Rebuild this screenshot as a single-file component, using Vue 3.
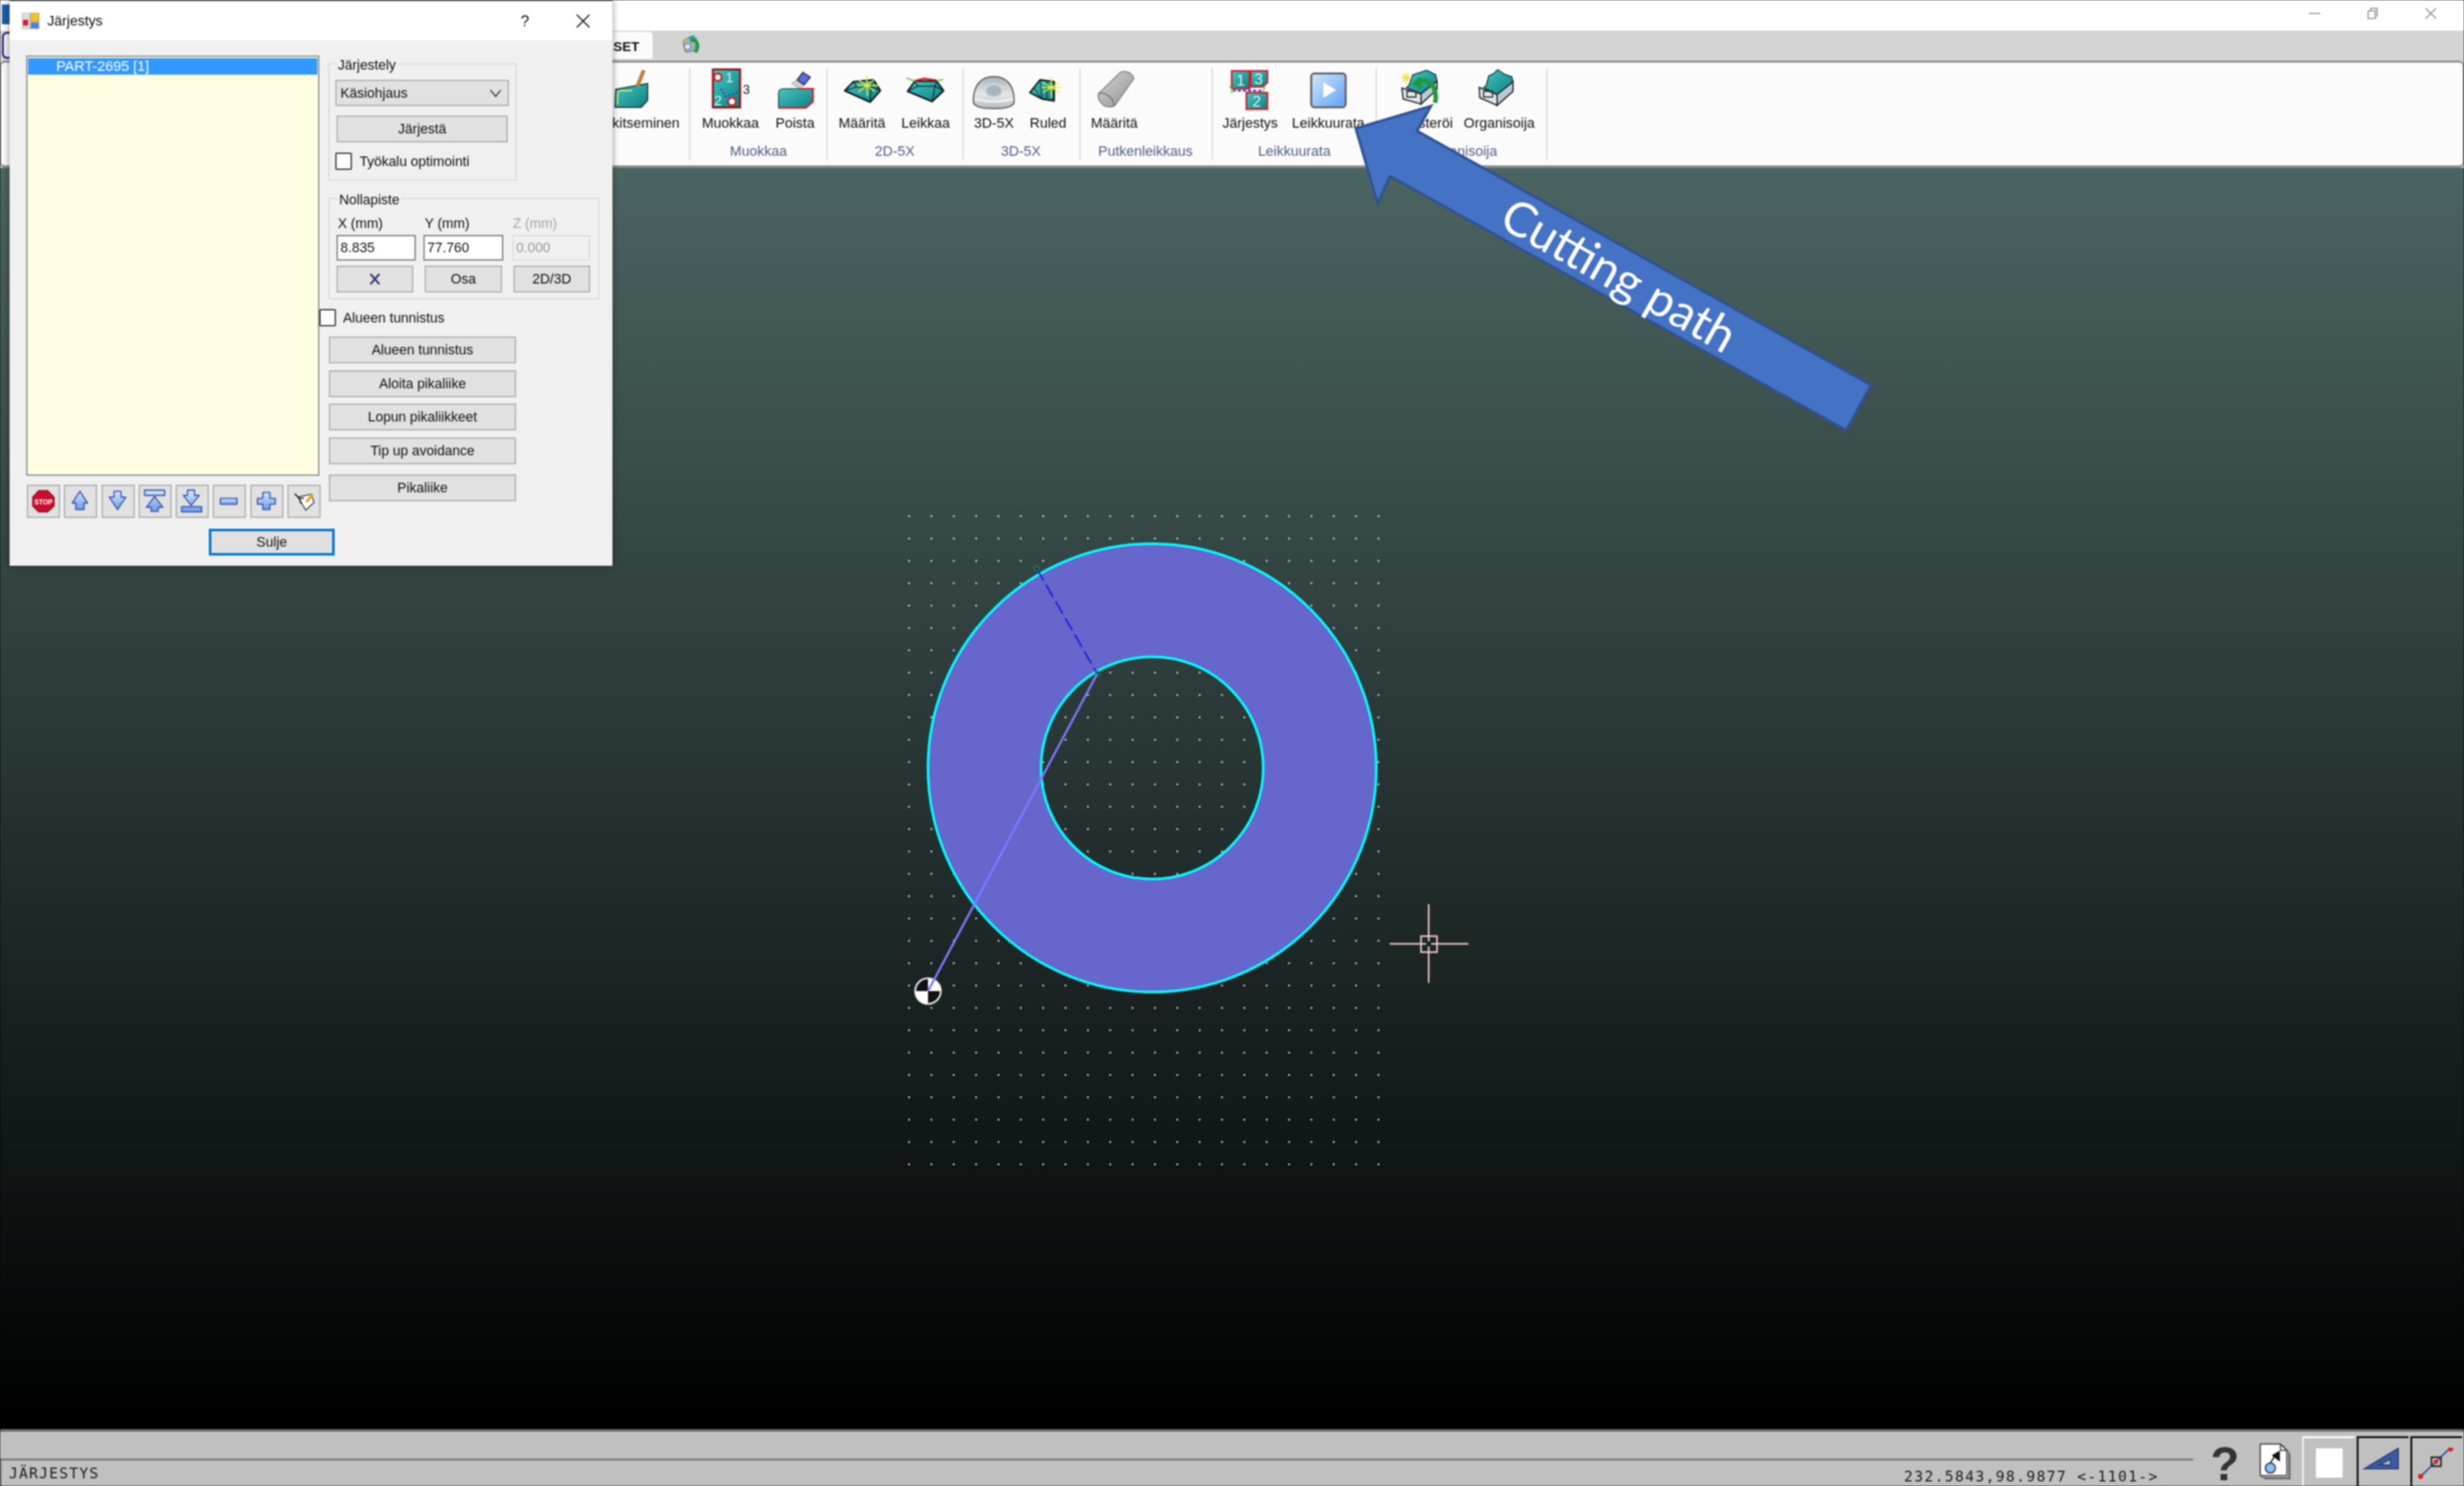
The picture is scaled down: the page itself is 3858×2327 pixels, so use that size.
<script setup>
const sideButtons = [
  { label: 'Alueen tunnistus', cls: '' },
  { label: 'Aloita pikaliike', cls: '' },
  { label: 'Lopun pikaliikkeet', cls: '' },
  { label: 'Tip up avoidance', cls: '' },
  { label: 'Pikaliike', cls: 'last' }
]
const upArrow = 'M25,9 L38,29 L32,29 L32,40 L18,40 L18,29 L12,29 Z'
const downArrow = 'M19,9 L31,9 L31,19 L39,19 L25,40 L11,19 L19,19 Z'
const toTop = 'M25,18 L39,36 L31,36 L31,43 L19,43 L19,36 L11,36 Z M8,7 H42 V16 H8 Z'
const toBottom = 'M18,7 H30 V16 H38 L24,33 L11,16 H18 Z M8,35 H42 V44 H8 Z'
const minus = 'M11,21 H39 V31 H11 Z'
const plus = 'M19,11 H31 V21 H40 V31 H31 V40 H19 V31 H10 V21 H19 Z'
const arrowIcons = [upArrow, downArrow, toTop, toBottom, minus, plus]
</script>

<template>
  <div class="app">
    <header class="titlebar">
      <div class="app-icon"></div>
      <div class="win-controls">
        <svg class="win-ico" viewBox="0 0 20 20"><path d="M1,10 H19" /></svg>
        <svg class="win-ico" viewBox="0 0 20 20"><path d="M3,6 H14 V18 H3 Z M7,6 V2 H17 V14 H14" /></svg>
        <svg class="win-ico" viewBox="0 0 20 20"><path d="M2,2 L18,18 M18,2 L2,18" /></svg>
      </div>
    </header>

    <div class="tabs">
      <div class="tab-home"></div>
      <div class="tab-active">ASETUKSET</div>
      <svg class="tab-icon" viewBox="0 0 32 30">
        <path d="M4,10 L14,4 L26,6 L22,26 L8,28 Z" fill="#9fb3bd" stroke="#56666e" />
        <path d="M14,3 L22,1 L24,8 L15,10 Z" fill="#2aa3a0" />
        <path d="M8,8 L4,6 M5,11 L1,12" stroke="#dede40" stroke-width="2" />
        <path d="M16,10 C26,6 31,16 24,28" fill="none" stroke="#1d9a3a" stroke-width="5" />
        <rect x="7" y="15" width="9" height="8" fill="#dfe8ec" stroke="#56666e" />
      </svg>
    </div>

    <nav class="ribbon">
      <section class="group g0">
        <div class="items end">
          <div class="item">
            <svg class="ico" viewBox="0 0 64 64">
              <defs>
                <linearGradient id="teal" x1="0" y1="0" x2="1" y2="1">
                  <stop offset="0" stop-color="#48c6c2" />
                  <stop offset="1" stop-color="#0a8080" />
                </linearGradient>
                <linearGradient id="blueArrow" x1="0" y1="0" x2="0" y2="1">
                  <stop offset="0" stop-color="#d6e4fb" />
                  <stop offset="1" stop-color="#6c9ce8" />
                </linearGradient>
                <linearGradient id="play" x1="0" y1="0" x2="1" y2="1">
                  <stop offset="0" stop-color="#d4e6fb" />
                  <stop offset="1" stop-color="#5ea2f4" />
                </linearGradient>
                <linearGradient id="dome" x1="0" y1="0" x2="0" y2="1">
                  <stop offset="0" stop-color="#aab2b8" />
                  <stop offset=".55" stop-color="#e4e8ea" />
                  <stop offset="1" stop-color="#b8bcbe" />
                </linearGradient>
                <linearGradient id="tube" x1="0" y1="0" x2="1" y2="1">
                  <stop offset="0" stop-color="#d8d8d8" />
                  <stop offset="1" stop-color="#8e8e8e" />
                </linearGradient>
              </defs>
              <path d="M4,33 L54,24 V50 L44,61 H3 Z" fill="url(#teal)" stroke="#1c3a3a" stroke-width="2" />
              <path d="M7,57 V40 Q8,35 14,35 H30" fill="none" stroke="#e2e868" stroke-width="2" />
              <path d="M48,3 L38,28" stroke="#bd8236" stroke-width="6" />
            </svg>
            <span>Merkitseminen</span>
          </div>
        </div>
      </section>

      <section class="group g1">
        <div class="items">
          <div class="item">
            <svg class="ico" viewBox="0 0 64 64">
              <rect x="4.5" y="2" width="42" height="59" fill="url(#teal)" stroke="#111" stroke-width="2" />
              <rect x="3.5" y="1" width="44" height="61" fill="none" stroke="#e0101c" stroke-width="2" />
              <circle cx="12" cy="14" r="6" fill="#d8efee" stroke="#d0202a" stroke-width="3" />
              <circle cx="34" cy="52" r="6" fill="#fff" stroke="#d0202a" stroke-width="3" />
              <text x="24" y="22" class="tile-num">1</text>
              <text x="6" y="58" class="tile-num">2</text>
              <path d="M17,32 L24,44 L44,38" fill="none" stroke="#1030e0" stroke-width="2" stroke-dasharray="3 3" />
              <text x="51" y="40" class="three">3</text>
            </svg>
            <span>Muokkaa</span>
          </div>
          <div class="item">
            <svg class="ico" viewBox="0 0 64 64">
              <path d="M6,38 Q7,32 14,32 H60 V52 L49,62 H6 Z" fill="url(#teal)" stroke="#20403f" stroke-width="1.5" />
              <path d="M38,32 H60 V52 L49,62 H6" fill="none" stroke="#e0101c" stroke-width="2.5" />
              <path d="M35,18 L46,26 L38,31 L26,24 Z" fill="#cfcfcf" stroke="#999" />
              <path d="M44,6 L56,14 L46,26 L35,18 Z" fill="#5a68d8" stroke="#222" stroke-width="1.5" />
            </svg>
            <span>Poista</span>
          </div>
        </div>
        <div class="group-label">Muokkaa</div>
      </section>

      <section class="group g2">
        <div class="items">
          <div class="item">
            <svg class="ico" viewBox="0 0 64 64">
              <path d="M4.5,35 L18,21 L50,18 L60.5,35 L44.5,53 Z" fill="url(#teal)" stroke="#111" stroke-width="2.5" stroke-linejoin="round" />
              <path d="M24,29 H46 L44.5,53 M24,29 L4.5,35 M46,28 L60.5,35 M18,21 L24,29 M50,18 L46,28" fill="none" stroke="#123" stroke-width="1.5" />
              <path d="M39,10 L40,44 M26,18 L52,36 M52,17 L26,37 M24,27 H58" stroke="#e8ee44" stroke-width="2" />
            </svg>
            <span>Määritä</span>
          </div>
          <div class="item">
            <svg class="ico" viewBox="0 0 64 64">
              <path d="M4,36 L15.5,20 L49.5,20 L60.5,35 L42.5,52 Z" fill="url(#teal)" stroke="#111" stroke-width="2.5" stroke-linejoin="round" />
              <path d="M20,28 H47 L42.5,52 M20,28 L4,36 M47,28 L60.5,35 M15.5,20 L20,28 M49.5,20 L47,28" fill="none" stroke="#123" stroke-width="1.5" />
              <path d="M15,20 L30,16 L50,19" fill="none" stroke="#e0101c" stroke-width="3" />
              <path d="M2,15 L15,20 M60,17 L50,20" stroke="#52d050" stroke-width="2" />
            </svg>
            <span>Leikkaa</span>
          </div>
        </div>
        <div class="group-label">2D-5X</div>
      </section>

      <section class="group g3">
        <div class="items">
          <div class="item">
            <svg class="ico" viewBox="0 0 64 64">
              <path d="M0,52 C0,24 14,13 32,13 C50,13 64,24 64,52 C64,60 50,63 32,63 C14,63 0,60 0,52 Z" fill="url(#dome)" stroke="#5a5a5a" stroke-width="2" />
              <ellipse cx="32" cy="35" rx="13" ry="10" fill="#a9b5bc" stroke="#d6dcdf" stroke-width="2" />
              <path d="M2,48 Q32,56 62,48" fill="none" stroke="#f6f6f6" stroke-width="3" />
            </svg>
            <span>3D-5X</span>
          </div>
          <div class="item">
            <svg class="ico" viewBox="0 0 64 64">
              <path d="M3.5,38 L19.5,18 L41.5,21 V51 L22.5,48 Z" fill="url(#teal)" stroke="#111" stroke-width="2.5" stroke-linejoin="round" />
              <path d="M19.5,18 L22.5,48 M10,30 L22,48 M30,20 L30,50" stroke="#123" stroke-width="1.2" />
              <path d="M37,14 L37,46 M24,22 L50,38 M50,22 L24,38 M22,30 H52" stroke="#e8ee44" stroke-width="2" />
            </svg>
            <span>Ruled</span>
          </div>
        </div>
        <div class="group-label">3D-5X</div>
      </section>

      <section class="group g4">
        <div class="items">
          <div class="item">
            <svg class="ico" viewBox="0 0 64 64">
              <path d="M6.5,40 L41.5,6 Q57,2 62.5,16 L33,58 Q24,63 15,58 Q5,50 6.5,40 Z" fill="url(#tube)" stroke="#777" stroke-width="1.5" />
              <path d="M6.5,40 Q14,36 24,44 Q33,52 30,60" fill="none" stroke="#666" stroke-width="1.5" />
            </svg>
            <span>Määritä</span>
          </div>
        </div>
        <div class="group-label">Putkenleikkaus</div>
      </section>

      <section class="group g5">
        <div class="items">
          <div class="item">
            <svg class="ico" viewBox="0 0 64 64">
              <g stroke="#e0101c" stroke-width="2.5">
                <rect x="3.5" y="4" width="28" height="28" fill="url(#teal)" />
                <path d="M33.5,4 H59.5 V22 L52,29 H33.5 Z" fill="url(#teal)" />
                <rect x="26.5" y="38" width="33" height="26" fill="url(#teal)" />
              </g>
              <text x="11" y="27" class="tile-num small">1</text>
              <text x="39" y="25" class="tile-num small">3</text>
              <text x="36" y="60" class="tile-num small">2</text>
              <path d="M5,35 H52" stroke="#1030e0" stroke-width="2.5" stroke-dasharray="5 3" />
              <path d="M0,28 L6,36 L2,38 M56,28 L52,36" fill="none" stroke="#52d050" stroke-width="2" />
            </svg>
            <span>Järjestys</span>
          </div>
          <div class="item">
            <svg class="ico" viewBox="0 0 64 64">
              <rect x="5" y="8" width="54" height="53" rx="5" fill="url(#play)" stroke="#5c5c5c" stroke-width="3" />
              <path d="M24,22 L44,34 L24,46 Z" fill="#fff" />
            </svg>
            <span>Leikkuurata</span>
          </div>
        </div>
        <div class="group-label">Leikkuurata</div>
      </section>

      <section class="group g6">
        <div class="items">
          <div class="item">
            <svg class="ico" viewBox="0 0 64 64">
              <path d="M12,27 L18,10 L28,7 L40,3 L54,10 L56,20 L31,40 L8,30 Z" fill="url(#teal)" stroke="#123" stroke-width="1.5" />
              <path d="M1,31 L31,40 V56 L3,48 Z" fill="#dfe8ec" stroke="#222" stroke-width="2" />
              <path d="M31,40 L56,20 V33 L31,56 Z" fill="#b6cbd4" stroke="#222" stroke-width="2" />
              <rect x="9" y="36" width="14" height="9" fill="none" stroke="#333" stroke-width="2" />
              <path d="M8,6 V24 M0,15 H16 M2,9 L14,21 M14,9 L2,21" stroke="#f0e048" stroke-width="2" />
              <path d="M53,54 C58,32 44,12 26,22" fill="none" stroke="#1d9a3a" stroke-width="7" />
              <path d="M30,12 L16,25 L32,32 Z" fill="#1d9a3a" />
            </svg>
            <span>Rekisteröi</span>
          </div>
          <div class="item">
            <svg class="ico" viewBox="0 0 64 64">
              <path d="M12,27 L16,12 L24,8 L30,2 L40,9 L52,13 L54,21 L29,41 L8,30 Z" fill="url(#teal)" stroke="#123" stroke-width="1.5" />
              <path d="M1,30 L29,41 V58 L2,46 Z" fill="#dfe8ec" stroke="#222" stroke-width="2" />
              <path d="M29,41 L54,21 V36 L29,58 Z" fill="#b6cbd4" stroke="#222" stroke-width="2" />
              <rect x="8" y="36" width="14" height="9" fill="none" stroke="#333" stroke-width="2" />
            </svg>
            <span>Organisoija</span>
          </div>
        </div>
        <div class="group-label">Organisoija</div>
      </section>
    </nav>

    <main class="canvas">
      <svg class="scene" viewBox="0 263 3858 1975">
        <defs>
          <pattern id="dots" x="1422" y="807" width="35" height="35" patternUnits="userSpaceOnUse">
            <rect width="2.6" height="2.6" fill="#dedede" />
          </pattern>
        </defs>
        <rect x="1420" y="805" width="742" height="1025" fill="url(#dots)" />
        <path
          d="M1453,1202.5 a351,351 0 1,0 702,0 a351,351 0 1,0 -702,0 Z M1630,1202.5 a174,174 0 1,0 348,0 a174,174 0 1,0 -348,0 Z"
          fill="#6666cc" fill-rule="evenodd" stroke="#00ffff" stroke-width="4"
        />
        <path d="M1623,890 L1718,1055" stroke="#1a1ae0" stroke-width="2.5" stroke-dasharray="22 8" />
        <circle cx="1623" cy="890" r="4" fill="none" stroke="#1a8a3a" stroke-width="1.5" />
        <circle cx="1719" cy="1055" r="4" fill="none" stroke="#1a8a3a" stroke-width="1.5" />
        <circle cx="1453" cy="1552" r="20" fill="#111" stroke="#dcdcdc" stroke-width="3" />
        <path d="M1453,1552 V1532 A20,20 0 0 1 1473,1552 Z M1453,1552 V1572 A20,20 0 0 1 1433,1552 Z" fill="#fff" />
        <path d="M1453,1552 L1718,1055" stroke="#7a7aff" stroke-width="3.5" />
        <g fill="none" stroke="#f2cccc" stroke-width="2.5">
          <path d="M2176,1478 H2233 M2241,1478 H2299 M2237,1416 V1474 M2237,1482 V1539" />
          <rect x="2225" y="1466" width="25" height="25" />
        </g>
      </svg>
    </main>

    <footer class="status">
      <div class="status-main">
        <div class="status-top"></div>
        <div class="status-cmd">
          <span class="cmd-text">JÄRJESTYS</span>
          <span class="coords">232.5843,98.9877 &lt;-1101-&gt;</span>
        </div>
      </div>
      <div class="status-tools">
        <span class="help-mark">?</span>
        <svg class="doc-ico" viewBox="0 0 52 60">
          <path d="M8,8 H40 L50,18 V58 H8 Z" fill="#777" />
          <path d="M5,5 H38 L47,15 V55 H5 Z" fill="#eee" stroke="#555" stroke-width="1.5" />
          <path d="M2,2 H34 L44,12 V52 H2 Z" fill="#fff" stroke="#444" stroke-width="2" />
          <path d="M34,2 V12 H44" fill="none" stroke="#444" stroke-width="2" />
          <circle cx="18" cy="40" r="8" fill="#8cc0f0" stroke="#235" stroke-width="2" />
          <path d="M18,32 L28,16 M22,20 L32,14 V28 Z" fill="#111" stroke="#111" stroke-width="2" />
        </svg>
        <div class="tool raised"><div class="white-box"></div></div>
        <div class="tool sunk">
          <svg class="tool-ico" viewBox="0 0 78 60">
            <path fill-rule="evenodd" d="M62,1 V33 H9 Z M50,18 L32,27 H50 Z" fill="#3c5a9e" stroke="#2a3f75" stroke-width="2" />
          </svg>
        </div>
        <div class="tool sunk">
          <svg class="tool-ico" viewBox="0 0 78 60">
            <path d="M13,45 L60,0" stroke="#3456a8" stroke-width="2.5" />
            <rect x="30" y="15" width="15" height="14" fill="none" stroke="#222" stroke-width="2.5" />
            <circle cx="13" cy="45" r="4" fill="#e02020" />
            <circle cx="37" cy="22" r="3.5" fill="#e02020" />
            <circle cx="60" cy="2" r="4" fill="#e02020" />
          </svg>
        </div>
      </div>
    </footer>

    <svg class="arrow" viewBox="2100 150 850 540">
      <path
        d="M2240.6,166 L2218.8,205 L2929.5,603 L2891,674 L2176.5,276 L2157,319 L2122.8,201 Z"
        fill="#4472c4" stroke="#2f528f" stroke-width="4"
      />
      <text class="arrow-text" x="2534" y="433" transform="rotate(29.5 2534 433)" dy="24">Cutting path</text>
    </svg>

    <aside class="dialog">
      <div class="dlg-title">
        <svg class="dlg-ico" viewBox="0 0 28 26">
          <rect x="0" y="0" width="13" height="25" fill="#dcdcdc" stroke="#aaa" />
          <rect x="14" y="0" width="13" height="14" fill="#f6c21c" stroke="#a88" />
          <rect x="2" y="11" width="8" height="9" fill="#d42020" />
          <rect x="14" y="15" width="13" height="10" fill="#4a82d8" stroke="#aaa" />
        </svg>
        <span class="dlg-name">Järjestys</span>
        <span class="dlg-help">?</span>
        <svg class="dlg-close" viewBox="0 0 24 24"><path d="M2,2 L22,22 M22,2 L2,22" /></svg>
      </div>

      <div class="dlg-body">
        <div class="dlg-left">
          <div class="list">
            <div class="list-row">PART-2695 [1]</div>
          </div>
          <div class="icon-row">
            <button class="icon-btn">
              <svg viewBox="0 0 52 52">
                <path d="M18,8 H33 L44,19 V34 L33,44 H18 L8,34 V19 Z" fill="#c8102e" stroke="#8f0a1e" stroke-width="2" />
                <text x="26" y="31" class="stop">STOP</text>
              </svg>
            </button>
            <button v-for="d in arrowIcons" :key="d" class="icon-btn">
              <svg viewBox="0 0 52 52">
                <path :d="d" fill="url(#blueArrow)" stroke="#3050a8" stroke-width="2" stroke-linejoin="round" />
              </svg>
            </button>
            <button class="icon-btn">
              <svg viewBox="0 0 52 52">
                <path d="M16,19 L38,14 L43,28 L29,41 Z" fill="#fff" stroke="#222" stroke-width="1.5" />
                <path d="M10,13 L18,21 M18,21 H26 M18,21 L21,30" fill="none" stroke="#111" stroke-width="2" />
                <path d="M41,14 L30,27" stroke="#dca83c" stroke-width="5" />
              </svg>
            </button>
          </div>
        </div>

        <div class="dlg-right">
          <div class="box box-order">
            <div class="legend">Järjestely</div>
            <div class="combo">
              <span>Käsiohjaus</span>
              <svg class="chev" viewBox="0 0 18 12"><path d="M1,1 L9,11 L17,1" /></svg>
            </div>
            <div class="btn btn-sort">Järjestä</div>
            <div class="check-row">
              <div class="check"></div>
              <span>Työkalu optimointi</span>
            </div>
          </div>

          <div class="box box-zero">
            <div class="legend">Nollapiste</div>
            <div class="axis-labels">
              <span>X (mm)</span>
              <span>Y (mm)</span>
              <span class="muted">Z (mm)</span>
            </div>
            <div class="axis-inputs">
              <div class="input">8.835</div>
              <div class="input">77.760</div>
              <div class="input off">0.000</div>
            </div>
            <div class="axis-btns">
              <div class="btn">
                <svg class="x-ico" viewBox="0 0 20 20"><path d="M3,2 L17,18 M17,2 L3,18" /></svg>
              </div>
              <div class="btn">Osa</div>
              <div class="btn">2D/3D</div>
            </div>
          </div>

          <div class="check-row area-row">
            <div class="check"></div>
            <span>Alueen tunnistus</span>
          </div>

          <div class="side-btns">
            <div v-for="b in sideButtons" :key="b.label" class="btn" :class="b.cls">{{ b.label }}</div>
          </div>
        </div>
      </div>

      <div class="btn btn-close">Sulje</div>
    </aside>
  </div>
</template>

<style>
html, body { margin: 0; padding: 0; background: #000; }
</style>

<style scoped>
* { box-sizing: border-box; }

.app {
  position: relative;
  width: 3858px;
  height: 2327px;
  display: flex;
  flex-direction: column;
  overflow: hidden;
  font-family: "Liberation Sans", Arial, sans-serif;
  font-size: 22px;
  line-height: 26px;
  color: #111;
  background: #fff;
  filter: blur(0.8px);
}

.titlebar { height: 48px; flex: none; background: #fff; display: flex; justify-content: space-between; }
.app-icon { width: 12px; height: 31px; margin: 7px 0 0 3px; background: #1a5fa8; }
.win-controls { display: flex; gap: 71px; padding: 11px 42px 0 0; }
.win-ico { width: 20px; height: 20px; fill: none; stroke: #9a9a9a; stroke-width: 2; }

.tabs { height: 47px; flex: none; background: #d4d4d4; display: flex; align-items: flex-start; padding: 2px 0 0 3px; }
.tab-home { width: 100px; height: 42px; border: 3px solid #2a2a80; border-radius: 8px; background: #f4f4f4; }
.tab-active {
  width: 152px; height: 45px; margin-left: 767px; padding-right: 21px;
  background: #fbfbfb; border-radius: 6px 6px 0 0;
  font-weight: 700; font-size: 21px; line-height: 46px; text-align: right; white-space: nowrap;
}
.tab-icon { width: 32px; height: 30px; margin: 4px 0 0 43px; }

.ribbon {
  height: 168px; flex: none; display: flex; padding: 9px 0 0 2px;
  background: #fbfbfb;
  border: solid #8a8a8a; border-width: 3px 2px 4px 2px; border-radius: 8px;
  box-shadow: 0 0 0 3px #d4d4d4;
}
.group {
  height: 144px; flex: none; display: flex; flex-direction: column;
  border-right: 2px solid #d9d9d9;
}
.g0 { width: 1077px; }
.g1 { width: 215px; padding-left: 18px; }
.g2 { width: 213px; padding-left: 17px; }
.g3 { width: 183px; padding-left: 16px; }
.g4 { width: 207px; padding-left: 16px; }
.g5 { width: 257px; padding-left: 15px; }
.g6 { width: 267px; padding-left: 21px; }
.g1 .group-label, .g2 .group-label, .g3 .group-label, .g4 .group-label { margin-left: -18px; }
.g5 .group-label { margin-left: -15px; }
.g6 .group-label { margin-left: -21px; }
.items { display: flex; gap: 25px; }
.items.end { justify-content: flex-end; padding-right: 15px; }
.g1 .items { gap: 26px; }
.g5 .items { gap: 22px; }
.g6 .items { gap: 17px; }
.item { display: flex; flex-direction: column; align-items: center; white-space: nowrap; }
.item span { margin-top: 9px; }
.ico { width: 64px; height: 64px; margin: 0 -16px; overflow: visible; flex: none; }
.group-label { margin-top: auto; text-align: center; color: #515f82; padding-bottom: 1px; }
.tile-num { font-family: "Liberation Sans", sans-serif; font-size: 22px; fill: #d8f4f2; }
.tile-num.small { font-size: 24px; }
.three { font-family: "Liberation Sans", sans-serif; font-size: 20px; fill: #222; }

.canvas { flex: 1; min-height: 0; background: linear-gradient(#4b6562, #000); }
.scene { display: block; width: 100%; height: 100%; }

.status { height: 89px; flex: none; display: flex; background: #c0c0c0; border-top: 4px solid #6e6e6e; }
.status-main { flex: 1; display: flex; flex-direction: column; min-width: 0; }
.status-top { height: 45px; flex: none; border-bottom: 3px solid #7a7a7a; }
.status-cmd {
  flex: 1; display: flex; justify-content: space-between; align-items: center;
  border-left: 3px solid #8a8a8a; padding: 0 54px 0 11px;
  font-family: "DejaVu Sans Mono", "Liberation Mono", monospace; color: #1c1c28;
  font-size: 23px; white-space: pre;
}
.cmd-text { letter-spacing: 1.9px; }
.coords { letter-spacing: 2.1px; padding-top: 10px; }
.status-tools { width: 424px; flex: none; display: flex; align-items: flex-end; padding-left: 27px; }
.help-mark { width: 41px; height: 68px; margin-right: 35px; font: 700 74px/68px "Liberation Sans", sans-serif; color: #333; text-align: center; }
.doc-ico { width: 52px; height: 60px; margin: 0 17px 8px 0; }
.tool { width: 82px; height: 78px; margin-right: 3px; display: flex; align-items: flex-start; justify-content: center; }
.raised { border-top: 3px solid #fff; border-left: 2px solid #fff; padding-top: 16px; }
.sunk { border-top: 3px solid #111; border-left: 3px solid #111; padding-top: 15px; }
.white-box { width: 42px; height: 46px; background: #fff; }
.tool-ico { width: 78px; height: 60px; }

.arrow { position: absolute; left: 2100px; top: 150px; width: 850px; height: 540px; }
.arrow-text { font-family: Lato, "Open Sans", sans-serif; font-size: 75px; fill: #fff; text-anchor: middle; }

.dialog {
  position: absolute; left: 15px; top: 0; width: 944px; height: 886px;
  display: flex; flex-direction: column;
  background: #f0f0f0; border-top: 2px solid #777;
  box-shadow: 0 0 10px rgba(0, 0, 0, .45);
  font-size: 21.5px;
}
.dlg-title { height: 61px; flex: none; display: flex; align-items: center; background: #fff; padding: 0 34px 0 19px; font-size: 22px; }
.dlg-ico { width: 28px; height: 26px; flex: none; }
.dlg-name { margin-left: 12px; flex: 1; }
.dlg-help { width: 22px; text-align: center; font-size: 24px; }
.dlg-close { width: 24px; height: 24px; margin-left: 68px; fill: none; stroke: #222; stroke-width: 2; }

.dlg-body { height: 748px; flex: none; display: flex; padding-left: 26px; }
.dlg-left { width: 459px; flex: none; padding-top: 24px; }
.list { height: 658px; background: #fffee2; border: 2px solid #8a8a8a; padding: 2px 1px; }
.list-row { height: 26px; background: #3399ff; color: #fff; padding-left: 44px; font-size: 22.5px; }
.icon-row { display: flex; gap: 6.3px; margin: 14px 0 0 1px; width: 461px; }
.icon-btn { width: 52px; height: 52px; flex: none; padding: 0; background: #e1e1e1; border: 2px solid #adadad; }
.icon-btn svg { display: block; width: 48px; height: 48px; }
.stop { font: 700 11.5px "Liberation Sans", sans-serif; fill: #fff; text-anchor: middle; }

.dlg-right { flex: 1; padding-top: 36px; }
.box { border: 2px solid #dcdcdc; margin-left: 14px; }
.legend { width: fit-content; margin: -12px 0 0 1px; padding: 0 3px; background: #f0f0f0; white-space: nowrap; }
.box-order { width: 295px; height: 184px; padding-left: 9px; }
.box-zero { width: 425px; height: 159px; margin-top: 27px; padding-left: 11px; }

.combo {
  width: 272px; height: 41px; margin-top: 10px; display: flex; align-items: center; justify-content: space-between;
  background: #e1e1e1; border: 2px solid #adadad; padding: 0 10px 0 6px;
}
.chev { width: 18px; height: 12px; fill: none; stroke: #333; stroke-width: 2; }

.btn {
  height: 42px; display: flex; align-items: center; justify-content: center;
  background: #e1e1e1; border: 2px solid #adadad; white-space: nowrap;
}
.btn-sort { width: 268px; margin: 15px 0 0 2px; }

.check-row { display: flex; align-items: center; gap: 12px; margin-top: 16px; height: 27px; white-space: nowrap; }
.check { width: 26px; height: 27px; flex: none; background: #fff; border: 2px solid #333; border-radius: 2px; }
.area-row { margin: 15px 0 0 0; gap: 11px; }

.axis-labels { display: grid; grid-template-columns: 136px 138px 1fr; margin-top: 11px; padding-left: 2px; }
.muted { color: #a6a6a6; }
.axis-inputs { display: grid; grid-template-columns: 124px 125px 124px; column-gap: 12px; margin-top: 5px; }
.input { height: 40px; background: #fff; border: 2px solid #7a7a7a; padding: 5px 0 0 4px; }
.input.off { background: #f0f0f0; color: #9a9a9a; border-color: #dadada; margin-left: 2px; }
.axis-btns { display: grid; grid-template-columns: 120px 121px 120px; column-gap: 18px; margin-top: 8px; }
.x-ico { width: 20px; height: 20px; fill: none; stroke: #2a3a70; stroke-width: 3; }

.side-btns { display: flex; flex-direction: column; gap: 10.5px; width: 293px; margin: 16px 0 0 15px; }
.side-btns .last { margin-top: 6px; }

.btn-close { width: 197px; margin: 17px 0 0 312px; border: 4px solid #0078d7; flex: none; }
</style>
